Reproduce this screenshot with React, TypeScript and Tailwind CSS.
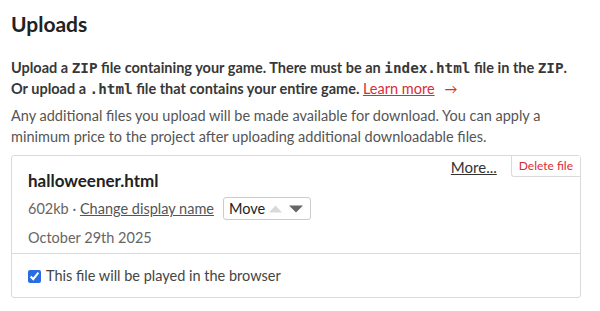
import React from "react";

const mono = "font-['DejaVu_Sans_Mono',monospace] text-[14.3px] leading-[0]";

export default function App() {
  const lato = { fontFamily: "Lato, 'Liberation Sans', sans-serif" };
  return (
    <div className="w-[600px] h-[311px] bg-white px-[11px] pt-[10px] text-[#333]" style={lato}>
      <h2 className="text-[21px] font-bold leading-[28px] text-[#222]">Uploads</h2>
      <p className="mt-[19px] text-[14.5px] font-bold leading-[21px] text-[#383838]">
        Upload a <code className={mono}>ZIP</code> file containing your game. There must be an{" "}
        <code className={mono}>index.html</code> file in the <code className={mono}>ZIP</code>.
        <br />
        Or upload a <code className={mono}>.html</code> file that contains your entire game.{" "}
        <a className="text-[#da2c38] underline font-normal">Learn more</a>
        <span className="text-[#da2c38] font-normal text-[13px] ml-[10px]">→</span>
      </p>
      <p className="mt-[5px] text-[14.5px] leading-[21px] text-[#555]">
        Any additional files you upload will be made available for download. You can apply a minimum price to the project after uploading additional downloadable files.
      </p>
      <div className="mt-[8px] w-[570px] border border-[#dadada] rounded-[3px]">
        <div className="relative px-[16px] pt-[14px]">
          <div className="absolute right-0 top-0 flex items-start">
            <a className="mr-[14px] mt-[1px] text-[15px] text-[#333] underline leading-[20px]">More...</a>
            <button className="border-l border-b border-[#dadada] rounded-bl-[3px] bg-white px-[7px] h-[21px] text-[12px] text-[#da2c38] leading-[20px]">
              Delete file
            </button>
          </div>
          <div className="text-[17px] font-bold leading-[22px] text-[#222]">halloweener.html</div>
          <div className="mt-[5px] flex items-center text-[14.5px] text-[#666] leading-[22px]">
            <span>602kb ·&nbsp;</span>
            <a className="underline text-[#555]">Change display name</a>
            <div className="ml-[9px] flex items-center h-[23px] border border-[#ccc] rounded-[3px] pl-[5px] pr-[6px] text-[#222]">
              <span className="text-[14.5px]">Move</span>
              <svg width="35" height="8" viewBox="0 0 35 8" className="ml-[4px]">
                <polygon points="0,7.5 6.5,0.5 13,7.5" fill="#d9d9d9" />
                <polygon points="20,0.5 34,0.5 27,7.5" fill="#666" />
              </svg>
            </div>
          </div>
          <div className="mt-[7px] text-[14.5px] text-[#666] leading-[22px]">October 29th 2025</div>
        </div>
        <div className="border-t border-[#dadada] mt-[4px] px-[16px] pt-[12px] pb-[11px] flex items-center text-[14.5px] text-[#444] leading-[20px]">
          <input type="checkbox" defaultChecked className="w-[13px] h-[13px] mr-[5px] accent-[#2a6de3]" />
          <span>This file will be played in the browser</span>
        </div>
      </div>
    </div>
  );
}
